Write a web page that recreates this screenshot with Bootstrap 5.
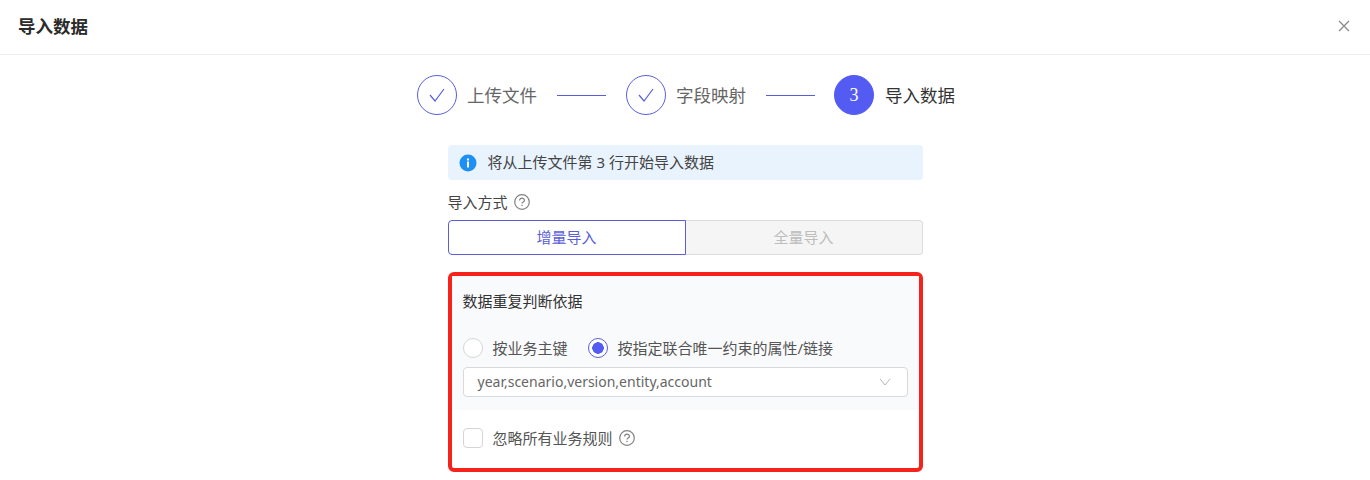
<!DOCTYPE html>
<html lang="zh-CN">
<head>
  <meta charset="UTF-8" />
  <meta name="viewport" content="width=device-width, initial-scale=1" />
  <title>导入数据</title>
  <link href="https://cdn.jsdelivr.net/npm/bootstrap@5.3.0/dist/css/bootstrap.min.css" rel="stylesheet" />
  <style>
    body { font-family: "Noto Sans", "Noto Sans CJK SC", sans-serif; font-size: 15px; color: #555; background: #fff; overflow: hidden; }
    .dlg-head { height: 55px; border-bottom: 1px solid #eeeeee; padding: 0 20px 2px 18px; }
    .dlg-title { font-size: 17.5px; font-weight: 700; color: #2b2b2b; }
    .steps { margin-top: 20px; height: 40px; padding-left: 2px; }
    .step-dot { width: 40px; height: 40px; border-radius: 50%; border: 1px solid #5a5fd8; flex: none; }
    .step-dot.on { background: #535bf2; border-color: #535bf2; color: #fff; font: 18px "Liberation Serif", serif; }
    .step-text { font-size: 17.5px; color: #666; margin-left: 10px; white-space: nowrap; }
    .step-text.on { color: #333; margin-left: 11px; }
    .step-line { width: 49px; height: 1px; background: #5a5fd8; margin: 0 20px; flex: none; }
    .step-line.last { margin-right: 19px; }
    .body-col { width: 475px; margin: 30px auto 0; }
    .tip { height: 35px; background: #e8f3fd; border-radius: 4px; padding-left: 11px; color: #444; gap: 11px; }
    .tip span { padding-bottom: 1px; }
    .way-label { margin-top: 12px; height: 20px; color: #444; gap: 6px; }
    .seg { margin-top: 8px; height: 35px; }
    .seg-on { flex: 0 0 238px; border: 1px solid #5a5fd8; border-radius: 4px 0 0 4px; color: #5a5fd8; background: #fff; }
    .seg-off { flex: 1 1 auto; border: 1px solid #dcdcdc; border-left: 0; border-radius: 0 4px 4px 0; color: #bdbdbd; background: #f5f5f5; }
    .red-box { margin-top: 17px; height: 200px; border: 4px solid #f5231c; border-radius: 6px; }
    .gray-area { background: #f9fafc; height: 134px; padding: 15px 11px 0; }
    .gray-title { height: 20px; color: #333; }
    .pick-row { margin-top: 27px; height: 20px; }
    .pick { width: 20px; height: 20px; margin: 0; flex: none; border: 1px solid #d5d5d5; background-color: #fff; }
    .pick.form-check-input:checked { background-color: #fff; background-image: radial-gradient(circle, #535bf2 0 5.5px, transparent 6px); border-color: #5a5fd8; }
    .pick-text { margin-left: 10px; color: #555; white-space: nowrap; }
    .pick-gap { margin-left: 20px; }
    .value-box { margin-top: 9px; height: 30px; border: 1px solid #d9d9d9; border-radius: 4px; background: #fff; padding: 0 16px 0 14px; color: #666; font-size: 14px; }
    .value-box span { padding-bottom: 2px; }
    .ignore-row { margin-top: 18px; padding-left: 11px; height: 20px; }
    .help-after { margin-left: 6px; }
    .pick.form-check-input[type=checkbox] { border-radius: 4px; }
  </style>
</head>
<body>
  <div class="dlg-head d-flex align-items-center justify-content-between">
    <div class="dlg-title">导入数据</div>
    <svg width="12" height="12" viewBox="0 0 12 12"><path d="M1 1l10 10M11 1L1 11" stroke="#8a8a8a" stroke-width="1.3" fill="none"/></svg>
  </div>

  <div class="steps d-flex align-items-center justify-content-center">
    <div class="step-dot d-flex align-items-center justify-content-center">
      <svg width="16" height="14" viewBox="0 0 16 14"><path d="M1 7l5 6L15 1" stroke="#5a5fd8" stroke-width="1.2" fill="none"/></svg>
    </div>
    <span class="step-text">上传文件</span>
    <span class="step-line"></span>
    <div class="step-dot d-flex align-items-center justify-content-center">
      <svg width="16" height="14" viewBox="0 0 16 14"><path d="M1 7l5 6L15 1" stroke="#5a5fd8" stroke-width="1.2" fill="none"/></svg>
    </div>
    <span class="step-text">字段映射</span>
    <span class="step-line last"></span>
    <div class="step-dot on d-flex align-items-center justify-content-center">3</div>
    <span class="step-text on">导入数据</span>
  </div>

  <div class="body-col">
    <div class="tip d-flex align-items-center">
      <svg width="18" height="18" viewBox="0 0 18 18"><circle cx="9" cy="9" r="8.5" fill="#1c90f5"/><rect x="8" y="7.5" width="2" height="6" fill="#fff"/><rect x="8" y="4.5" width="2" height="2" fill="#fff"/></svg>
      <span>将从上传文件第 3 行开始导入数据</span>
    </div>

    <div class="way-label d-flex align-items-center">
      <span>导入方式</span>
      <svg width="16" height="16" viewBox="0 0 16 16"><circle cx="8" cy="8" r="7.3" fill="none" stroke="#808080" stroke-width="1.2"/><path d="M5.6 6.4c0-3 4.8-3 4.8 0 0 1.8-2.4 1.5-2.4 3.2" fill="none" stroke="#808080" stroke-width="1.2"/><rect x="7.4" y="10.8" width="1.3" height="1.3" fill="#808080"/></svg>
    </div>

    <div class="seg d-flex">
      <div class="seg-on d-flex align-items-center justify-content-center">增量导入</div>
      <div class="seg-off d-flex align-items-center justify-content-center">全量导入</div>
    </div>

    <div class="red-box">
      <div class="gray-area">
        <div class="gray-title d-flex align-items-center">数据重复判断依据</div>
        <div class="pick-row d-flex align-items-center">
          <input class="form-check-input pick" type="radio" name="dup" />
          <span class="pick-text">按业务主键</span>
          <input class="form-check-input pick pick-gap" type="radio" name="dup" checked />
          <span class="pick-text">按指定联合唯一约束的属性/链接</span>
        </div>
        <div class="value-box d-flex align-items-center justify-content-between">
          <span>year,scenario,version,entity,account</span>
          <svg width="12" height="8" viewBox="0 0 12 8"><path d="M1 1l5 6 5-6" stroke="#b5b5b5" fill="none"/></svg>
        </div>
      </div>
      <div class="ignore-row d-flex align-items-center">
        <input class="form-check-input pick" type="checkbox" />
        <span class="pick-text">忽略所有业务规则</span>
        <svg class="help-after" width="16" height="16" viewBox="0 0 16 16"><circle cx="8" cy="8" r="7.3" fill="none" stroke="#808080" stroke-width="1.2"/><path d="M5.6 6.4c0-3 4.8-3 4.8 0 0 1.8-2.4 1.5-2.4 3.2" fill="none" stroke="#808080" stroke-width="1.2"/><rect x="7.4" y="10.8" width="1.3" height="1.3" fill="#808080"/></svg>
      </div>
    </div>
  </div>

  <script src="https://cdn.jsdelivr.net/npm/bootstrap@5.3.0/dist/js/bootstrap.bundle.min.js"></script>
</body>
</html>
